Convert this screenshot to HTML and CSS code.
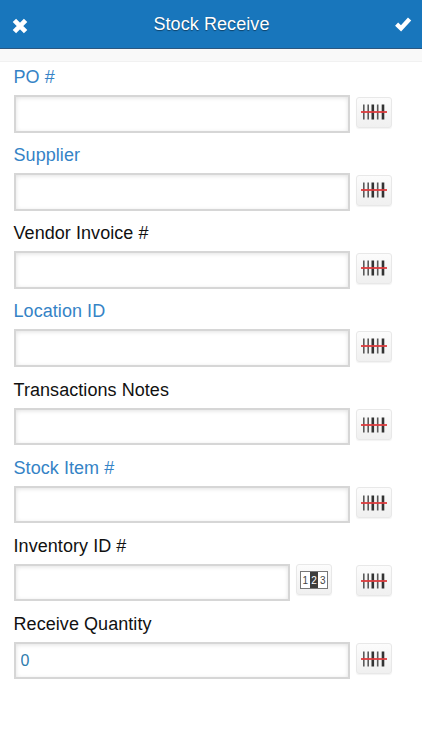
FILE: index.html
```html
<!DOCTYPE html>
<html lang="en">
<head>
    <meta charset="UTF-8">
    <meta name="viewport" content="width=device-width, initial-scale=1.0">
    <title>Stock Receive</title>
    <link rel="stylesheet" href="styles.css">
</head>
<body>
    <!-- Shared icons -->
    <svg class="icons" width="0" height="0">
        <symbol id="barcode" viewBox="0 0 26 16">
            <path d="M2.8 .5v15M7.2 .5v15M16.7 .5v15" stroke="#5a5a5a" stroke-width="1.6"/>
            <path d="M11.8 .5v15M22 .5v15" stroke="#333" stroke-width="2.6"/>
            <path d="M0 8h26" stroke="#dc3c3e" stroke-opacity=".9" stroke-width="2"/>
        </symbol>
    </svg>

    <header class="header">
        <button type="button" class="header-btn close" aria-label="Close">
            <svg width="18" height="18" viewBox="0 0 18 18"><path d="M3.4 3.4L14.6 14.6M14.6 3.4L3.4 14.6" stroke="#fff" stroke-width="4.8" stroke-linejoin="round"/></svg>
        </button>
        <h1>Stock Receive</h1>
        <button type="button" class="header-btn" aria-label="Save">
            <svg width="18" height="18" viewBox="0 0 18 18"><path d="M2.6 9.2L7 13.4L15.6 4" fill="none" stroke="#fff" stroke-width="4.4"/></svg>
        </button>
    </header>
    <div class="subheader"></div>

    <form class="form">
        <div class="field">
            <label class="link" for="po">PO #</label>
            <div class="row">
                <input type="text" id="po">
                <button type="button" class="scan" aria-label="Scan"><svg width="26" height="16"><use href="#barcode"/></svg></button>
            </div>
        </div>
        <div class="field">
            <label class="link" for="supplier">Supplier</label>
            <div class="row">
                <input type="text" id="supplier">
                <button type="button" class="scan" aria-label="Scan"><svg width="26" height="16"><use href="#barcode"/></svg></button>
            </div>
        </div>
        <div class="field">
            <label for="invoice">Vendor Invoice #</label>
            <div class="row">
                <input type="text" id="invoice">
                <button type="button" class="scan" aria-label="Scan"><svg width="26" height="16"><use href="#barcode"/></svg></button>
            </div>
        </div>
        <div class="field">
            <label class="link" for="location">Location ID</label>
            <div class="row">
                <input type="text" id="location">
                <button type="button" class="scan" aria-label="Scan"><svg width="26" height="16"><use href="#barcode"/></svg></button>
            </div>
        </div>
        <div class="field">
            <label for="notes">Transactions Notes</label>
            <div class="row">
                <input type="text" id="notes">
                <button type="button" class="scan" aria-label="Scan"><svg width="26" height="16"><use href="#barcode"/></svg></button>
            </div>
        </div>
        <div class="field">
            <label class="link" for="item">Stock Item #</label>
            <div class="row">
                <input type="text" id="item">
                <button type="button" class="scan" aria-label="Scan"><svg width="26" height="16"><use href="#barcode"/></svg></button>
            </div>
        </div>
        <div class="field">
            <label for="inventory">Inventory ID #</label>
            <div class="row">
                <input type="text" id="inventory">
                <button type="button" class="scan serial" aria-label="Next number">
                    <span class="digits"><span>1</span><span class="current">2</span><span>3</span></span>
                </button>
                <button type="button" class="scan" aria-label="Scan"><svg width="26" height="16"><use href="#barcode"/></svg></button>
            </div>
        </div>
        <div class="field">
            <label for="quantity">Receive Quantity</label>
            <div class="row">
                <input type="text" id="quantity" value="0">
                <button type="button" class="scan" aria-label="Scan"><svg width="26" height="16"><use href="#barcode"/></svg></button>
            </div>
        </div>
    </form>
</body>
</html>
```
FILE: styles.css
```css
* {
    box-sizing: border-box;
}

body {
    font-family: "Liberation Sans", Arial, sans-serif;
    margin: 0;
    background-color: #fff;
    color: #111;
}

.icons {
    display: block;
}

.header {
    display: flex;
    align-items: center;
    justify-content: space-between;
    height: 49px;
    padding: 0 10px 0 11px;
    background-color: #1876bc;
    border-bottom: 1px solid #2b5780;
}

.header h1 {
    margin: 0;
    font-size: 18px;
    font-weight: normal;
    letter-spacing: 0.08px;
    color: #fff;
    line-height: 48px;
    text-shadow: 0 1px 1px rgba(0, 0, 0, 0.45);
}

.header-btn {
    display: block;
    padding: 0;
    border: none;
    background: none;
    height: 18px;
}

.close {
    margin-top: 4px;
}

.header-btn svg {
    display: block;
}

.subheader {
    height: 13px;
    background-color: #f9f9f9;
    border-bottom: 1px solid #f1f1f1;
}

.form {
    padding: 4px 30px 0 13.5px;
}

.field {
    height: 78.15px;
}

label {
    display: block;
    height: 29px;
    line-height: 23px;
    font-size: 18px;
    letter-spacing: 0.06px;
}

label.link {
    color: #3583c6;
}

.row {
    display: flex;
    gap: 6px;
}

input {
    flex: 1;
    min-width: 0;
    height: 37.5px;
    padding: 0 5px;
    border: 2px solid #d6d6d6;
    border-radius: 0;
    background-color: #fff;
    box-shadow: inset 0 1px 4px rgba(0, 0, 0, 0.12);
    font-family: inherit;
    font-size: 16px;
    color: #2f7cae;
}

.scan {
    display: flex;
    align-items: center;
    justify-content: center;
    width: 36px;
    height: 31px;
    margin-top: 1.5px;
    padding: 0;
    border: 1px solid #e8e8e8;
    border-radius: 3px;
    background: linear-gradient(#fcfcfc, #f0f0f0);
    box-shadow: 0 1px 1px rgba(0, 0, 0, 0.05);
}

.serial {
    margin-top: 0.5px;
    margin-right: 18px;
}

.digits {
    display: flex;
    width: 28px;
    height: 18px;
    border: 1px solid #777;
    background-color: #fff;
    font-family: "Liberation Sans", Arial, sans-serif;
    font-size: 10px;
    line-height: 17px;
    color: #444;
}

.digits span {
    flex: 1;
    text-align: center;
}

.digits .current {
    background-color: #3c3c3c;
    color: #fff;
}
```
